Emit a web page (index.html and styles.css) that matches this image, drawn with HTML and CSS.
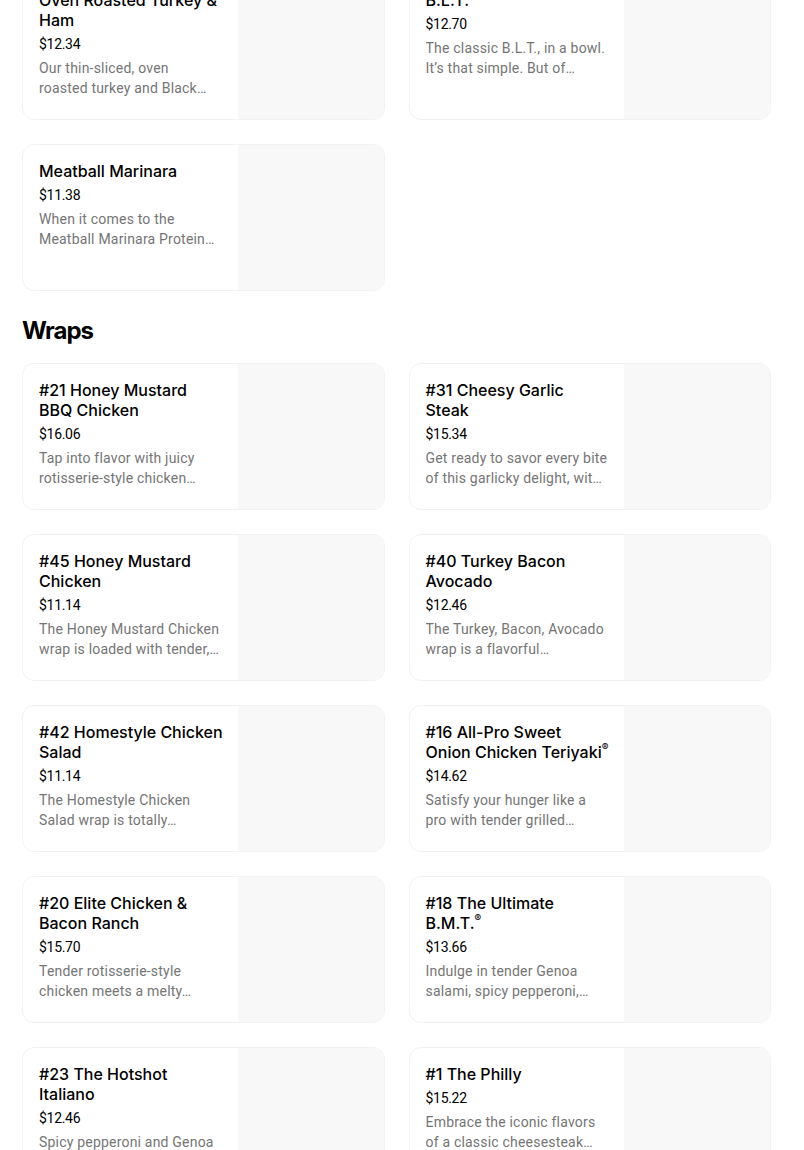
FILE: index.html
```html
<!DOCTYPE html>
<html lang="en">
<head>
<meta charset="utf-8">
<title>Menu</title>
<link rel="stylesheet" href="styles.css">
</head>
<body>
<main class="menu">
  <section class="category category-first">
    <div class="grid">
      <article class="card">
        <div class="info">
          <h3 class="title">Oven Roasted Turkey &amp; Ham</h3>
          <div class="price">$12.34</div>
          <p class="desc">Our thin-sliced, oven<br>roasted turkey and Black…</p>
        </div>
        <div class="thumb"></div>
      </article>
      <article class="card">
        <div class="info">
          <h3 class="title">B.L.T.</h3>
          <div class="price">$12.70</div>
          <p class="desc">The classic B.L.T., in a bowl. It’s that simple. But of…</p>
        </div>
        <div class="thumb"></div>
      </article>
      <article class="card">
        <div class="info">
          <h3 class="title">Meatball Marinara</h3>
          <div class="price">$11.38</div>
          <p class="desc">When it comes to the Meatball Marinara Protein…</p>
        </div>
        <div class="thumb"></div>
      </article>
    </div>
  </section>

  <section class="category">
    <h2 class="cat-title">Wraps</h2>
    <div class="grid">
      <article class="card">
        <div class="info">
          <h3 class="title">#21 Honey Mustard BBQ Chicken</h3>
          <div class="price">$16.06</div>
          <p class="desc">Tap into flavor with juicy rotisserie-style chicken…</p>
        </div>
        <div class="thumb"></div>
      </article>
      <article class="card">
        <div class="info">
          <h3 class="title">#31 Cheesy Garlic Steak</h3>
          <div class="price">$15.34</div>
          <p class="desc">Get ready to savor every bite of this garlicky delight, wit…</p>
        </div>
        <div class="thumb"></div>
      </article>
      <article class="card">
        <div class="info">
          <h3 class="title">#45 Honey Mustard Chicken</h3>
          <div class="price">$11.14</div>
          <p class="desc">The Honey Mustard Chicken wrap is loaded with tender,…</p>
        </div>
        <div class="thumb"></div>
      </article>
      <article class="card">
        <div class="info">
          <h3 class="title">#40 Turkey Bacon Avocado</h3>
          <div class="price">$12.46</div>
          <p class="desc">The Turkey, Bacon, Avocado wrap is a flavorful…</p>
        </div>
        <div class="thumb"></div>
      </article>
      <article class="card">
        <div class="info">
          <h3 class="title">#42 Homestyle Chicken Salad</h3>
          <div class="price">$11.14</div>
          <p class="desc">The Homestyle Chicken Salad wrap is totally…</p>
        </div>
        <div class="thumb"></div>
      </article>
      <article class="card">
        <div class="info">
          <h3 class="title">#16 All-Pro Sweet<br>Onion Chicken Teriyaki<span class="reg">®</span></h3>
          <div class="price">$14.62</div>
          <p class="desc">Satisfy your hunger like a pro with tender grilled…</p>
        </div>
        <div class="thumb"></div>
      </article>
      <article class="card">
        <div class="info">
          <h3 class="title">#20 Elite Chicken &amp; Bacon Ranch</h3>
          <div class="price">$15.70</div>
          <p class="desc">Tender rotisserie-style chicken meets a melty…</p>
        </div>
        <div class="thumb"></div>
      </article>
      <article class="card">
        <div class="info">
          <h3 class="title">#18 The Ultimate B.M.T.<span class="reg">®</span></h3>
          <div class="price">$13.66</div>
          <p class="desc">Indulge in tender Genoa salami, spicy pepperoni,…</p>
        </div>
        <div class="thumb"></div>
      </article>
      <article class="card">
        <div class="info">
          <h3 class="title">#23 The Hotshot Italiano</h3>
          <div class="price">$12.46</div>
          <p class="desc">Spicy pepperoni and Genoa salami come together…</p>
        </div>
        <div class="thumb"></div>
      </article>
      <article class="card">
        <div class="info">
          <h3 class="title">#1 The Philly</h3>
          <div class="price">$15.22</div>
          <p class="desc">Embrace the iconic flavors of a classic cheesesteak…</p>
        </div>
        <div class="thumb"></div>
      </article>
    </div>
  </section>
</main>
</body>
</html>
```
FILE: styles.css
```css
html, body {
  margin: 0;
  padding: 0;
  background: #ffffff;
}

body {
  font-family: "Roboto", "Liberation Sans", sans-serif;
  color: #000000;
}

.menu {
  width: 749px;
  padding-left: 22px;
  margin-top: -27px;
}

.category-first {
  margin-bottom: 24px;
}

.cat-title {
  margin: 0 0 16px;
  font-family: "Inter", "Roboto", sans-serif;
  font-size: 24px;
  font-weight: 700;
  line-height: 32px;
  letter-spacing: -1px;
  color: #000000;
}

.grid {
  display: grid;
  grid-template-columns: 1fr 1fr;
  column-gap: 24px;
  row-gap: 24px;
}

.card {
  box-sizing: border-box;
  height: 147px;
  display: grid;
  grid-template-columns: 1fr 146px;
  border: 1px solid #f2f2f2;
  border-radius: 12px;
  overflow: hidden;
  background: #ffffff;
}

.info {
  padding: 16px 14px 0 16px;
  min-width: 0;
}

.title {
  margin: 0;
  font-family: "Inter", "Roboto", sans-serif;
  font-size: 16px;
  font-weight: 500;
  line-height: 20px;
  color: #000000;
}

.reg {
  font-size: 10px;
  line-height: 1;
  vertical-align: text-top;
}

.price {
  margin-top: 4px;
  font-size: 14px;
  line-height: 20px;
  letter-spacing: -0.3px;
  color: #000000;
}

.desc {
  margin: 4px 0 0;
  font-size: 14px;
  line-height: 20px;
  letter-spacing: 0.2px;
  color: #757575;
  display: -webkit-box;
  -webkit-line-clamp: 2;
  -webkit-box-orient: vertical;
  overflow: hidden;
}

.thumb {
  background: #f8f8f8;
}
```
